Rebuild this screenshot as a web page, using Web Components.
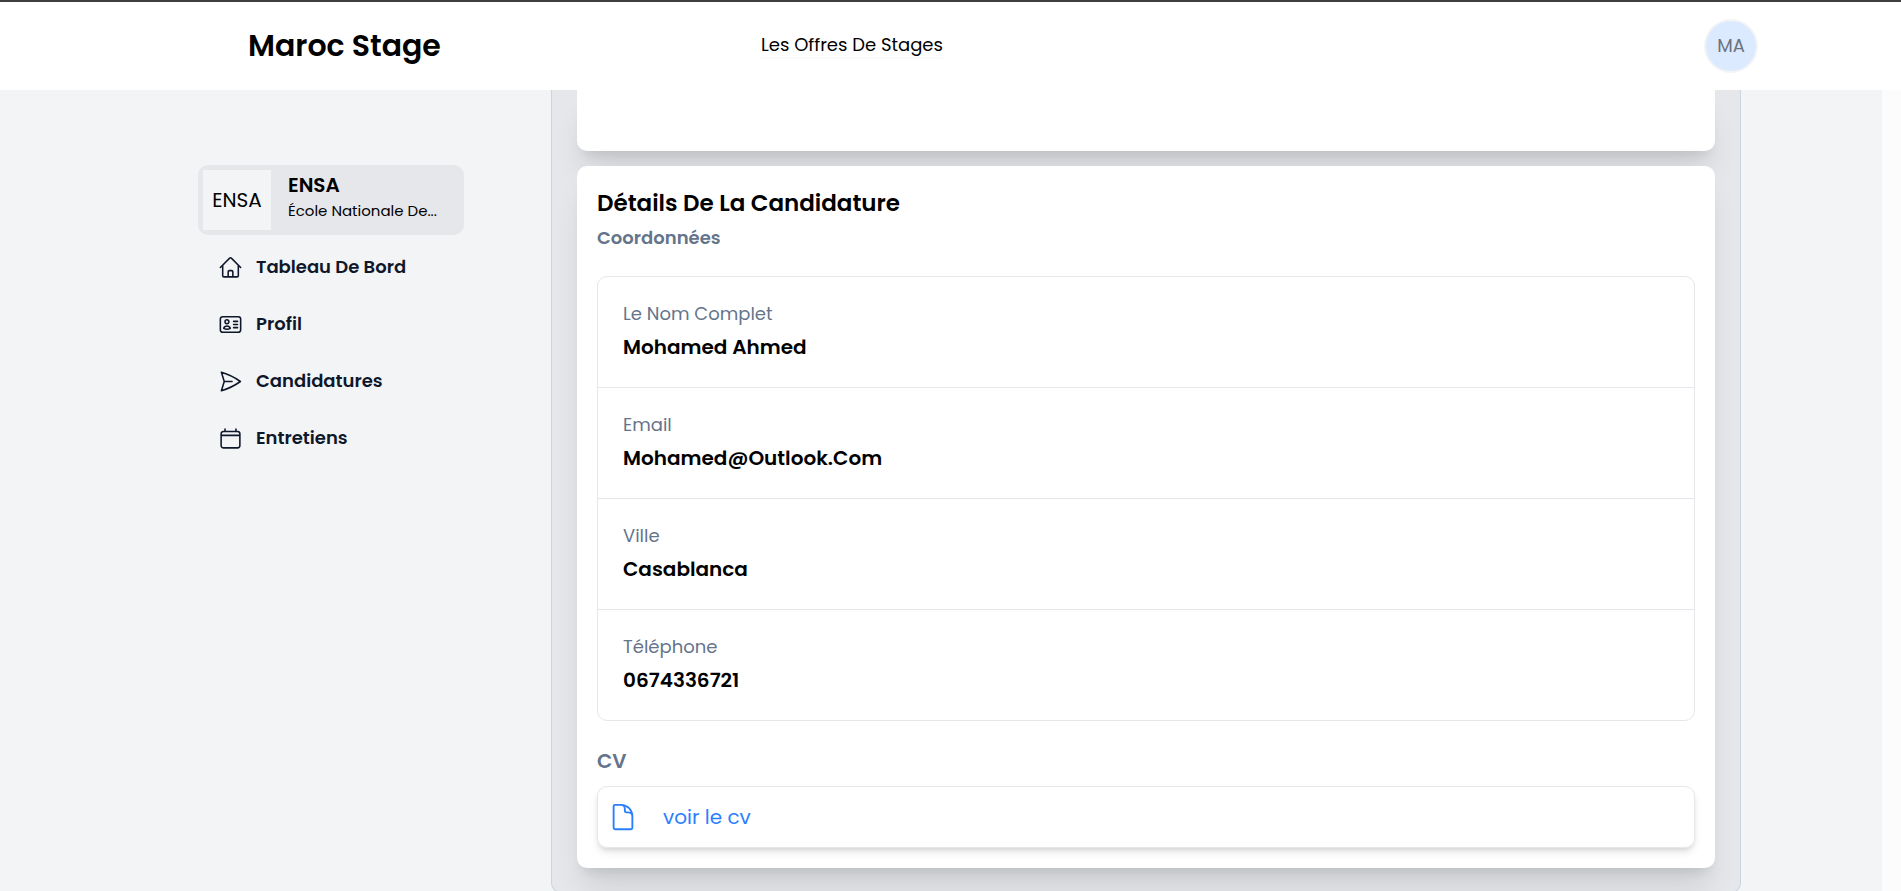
<!DOCTYPE html>
<html lang="fr">
<head>
<meta charset="utf-8">
<meta name="viewport" content="width=device-width, initial-scale=1">
<title>Maroc Stage</title>
<style>
  body {
    margin: 0;
    font-family: Poppins, Inter, "Open Sans", sans-serif;
    font-size: 18px;
    line-height: 28px;
    color: #000;
    background: #f3f4f6;
    --muted: #64748b;
    --line: #e5e7eb;
    --ink: #0f172a;
    --link: #2b7fff;
  }
</style>
</head>
<body>
<app-shell>
  <app-header slot="header" initials="MA">
    <span slot="brand">Maroc Stage</span>
    <a slot="nav" href="#offres">Les Offres De Stages</a>
  </app-header>

  <side-bar slot="sidebar">
    <school-card slot="top" logo="ENSA">
      <span slot="name">ENSA</span>
      <span slot="about">École Nationale De...</span>
    </school-card>
    <nav-item icon="home" href="#tableau">Tableau De Bord</nav-item>
    <nav-item icon="identity" href="#profil">Profil</nav-item>
    <nav-item icon="send" href="#candidatures">Candidatures</nav-item>
    <nav-item icon="calendar" href="#entretiens">Entretiens</nav-item>
  </side-bar>

  <content-card class="previous"></content-card>
  <content-card>
    <section-title slot="title" sub="Coordonnées">Détails De La Candidature</section-title>
    <detail-list>
      <detail-row label="Le Nom Complet">Mohamed Ahmed</detail-row>
      <detail-row label="Email">Mohamed@Outlook.Com</detail-row>
      <detail-row label="Ville">Casablanca</detail-row>
      <detail-row label="Téléphone">0674336721</detail-row>
    </detail-list>
    <file-link heading="CV" href="#cv">voir le cv</file-link>
  </content-card>
</app-shell>

<script>
  const ICONS = {
    home: '<path d="M2.25 12l8.954-8.955c.44-.439 1.152-.439 1.591 0L21.75 12M4.5 9.75v10.125c0 .621.504 1.125 1.125 1.125H9.75v-4.875c0-.621.504-1.125 1.125-1.125h2.25c.621 0 1.125.504 1.125 1.125V21h4.125c.621 0 1.125-.504 1.125-1.125V9.75M8.25 21h8.25"/>',
    identity: '<path d="M15 9h3.75M15 12h3.75M15 15h3.75M4.5 19.5h15a2.25 2.25 0 002.25-2.25V6.75A2.25 2.25 0 0019.5 4.5h-15a2.25 2.25 0 00-2.25 2.25v10.5A2.25 2.25 0 004.5 19.5zm6-10.125a1.875 1.875 0 11-3.75 0 1.875 1.875 0 013.75 0zm1.294 6.336a6.721 6.721 0 01-3.17.789 6.721 6.721 0 01-3.168-.789 3.376 3.376 0 016.338 0z"/>',
    send: '<path d="M6 12L3.269 3.126A59.768 59.768 0 0121.485 12 59.77 59.77 0 013.27 20.876L5.999 12zm0 0h7.5"/>',
    calendar: '<path d="M6.75 3v2.25M17.25 3v2.25M5.25 5.25h13.5a2.25 2.25 0 012.25 2.25v11.25a2.25 2.25 0 01-2.25 2.25H5.25A2.25 2.25 0 013 18.75V7.5a2.25 2.25 0 012.25-2.25zM3 9h18"/>',
    file: '<path d="M19.5 14.25v-2.625a3.375 3.375 0 00-3.375-3.375h-1.5A1.125 1.125 0 0113.5 7.125v-1.5a3.375 3.375 0 00-3.375-3.375H5.625c-.621 0-1.125.504-1.125 1.125v17.25c0 .621.504 1.125 1.125 1.125h12.75c.621 0 1.125-.504 1.125-1.125V11.25a9 9 0 00-9-9"/>'
  };
  const svg = name => `<svg viewBox="0 0 24 24" fill="none" stroke="currentColor" stroke-width="1.5" stroke-linecap="round" stroke-linejoin="round" aria-hidden="true">${ICONS[name]}</svg>`;

  const define = (tag, render) => customElements.define(tag, class extends HTMLElement {
    connectedCallback() {
      if (this.shadowRoot) return;
      this.attachShadow({ mode: 'open' }).innerHTML = render(this);
    }
  });

  define('app-shell', () => `
    <style>
      :host { display: flex; flex-direction: column; height: 100vh; overflow: hidden; }
      .body { flex: 1; min-height: 0; display: flex; overflow: hidden; }
      aside { flex: none; width: 266px; padding: 75px 87px 0 198px; }
      main {
        flex: 1; min-width: 0; align-self: flex-start; box-sizing: border-box;
        display: flex; flex-direction: column; gap: 15px;
        padding: 0 25px 24px; background: #e5e7eb;
        border: 1px solid #cbd5e1; border-top: 0; border-radius: 0 0 10px 10px;
      }
      .margin { flex: none; width: 141px; }
      .track { flex: none; width: 19px; background: #fcfcfc; }
    </style>
    <slot name="header"></slot>
    <div class="body">
      <aside><slot name="sidebar"></slot></aside>
      <main><slot></slot></main>
      <div class="margin"></div>
      <div class="track"></div>
    </div>`);

  define('app-header', el => `
    <style>
      :host { display: block; flex: none; background: #fff; border-top: 2px solid #3f3d3e; }
      header {
        display: grid; grid-template-columns: 513px 1fr auto; align-items: center;
        height: 88px; padding: 0 143px 0 248px;
      }
      .brand { font-size: 30px; line-height: 40px; font-weight: 600; }
      nav { display: flex; }
      ::slotted(a) { line-height: 24px; color: #000; text-decoration: none; border-bottom: 2px solid #fafafa; }
      button {
        width: 54px; height: 54px; padding: 0; border: 2px solid #f3f4f6; border-radius: 50%;
        background: #dbeafe; color: #6b7280; font: inherit;
      }
    </style>
    <header>
      <div class="brand"><slot name="brand"></slot></div>
      <nav><slot name="nav"></slot></nav>
      <button type="button">${el.getAttribute('initials')}</button>
    </header>`);

  define('side-bar', () => `
    <style>
      :host { display: block; }
      nav { display: flex; flex-direction: column; gap: 29px; padding: 18px 20px; }
    </style>
    <slot name="top"></slot>
    <nav><slot></slot></nav>`);

  define('school-card', el => `
    <style>
      :host { display: flex; gap: 17px; padding: 5px; border-radius: 10px; background: #e5e7eb; }
      .logo { flex: none; width: 68px; height: 60px; display: grid; place-items: center; background: #f3f4f6; font-size: 20px; }
      .text { flex: 1; min-width: 0; }
      .name { font-size: 20px; line-height: 30px; font-weight: 600; }
      .about { font-size: 15px; line-height: 22px; white-space: nowrap; }
    </style>
    <div class="logo">${el.getAttribute('logo')}</div>
    <div class="text">
      <div class="name"><slot name="name"></slot></div>
      <div class="about"><slot name="about"></slot></div>
    </div>`);

  define('nav-item', el => `
    <style>
      :host { display: block; }
      a { display: flex; align-items: center; gap: 13px; color: var(--ink); text-decoration: none; font-weight: 600; }
      svg { width: 25px; height: 25px; }
    </style>
    <a href="${el.getAttribute('href')}">${svg(el.getAttribute('icon'))}<span><slot></slot></span></a>`);

  define('content-card', () => `
    <style>
      :host {
        display: block; padding: 20px; border-radius: 10px; background: #fff;
        box-shadow: 0 25px 31px -6px rgb(0 0 0 / .1), 0 10px 12px -7px rgb(0 0 0 / .1);
      }
      :host(.previous) { height: 21px; border-radius: 0 0 10px 10px; }
    </style>
    <slot name="title"></slot>
    <slot></slot>`);

  define('section-title', el => `
    <style>
      :host { display: block; margin-bottom: 20px; }
      h2, h3 { margin: 0; font-weight: 600; }
      h2 { font-size: 23px; line-height: 34px; }
      h3 { font-size: 18px; line-height: 36px; color: var(--muted); }
    </style>
    <h2><slot></slot></h2>
    <h3>${el.getAttribute('sub')}</h3>`);

  define('detail-list', () => `
    <style>
      :host { display: block; border: 1px solid var(--line); border-radius: 10px; }
      dl { margin: 0; }
      ::slotted(:not(:first-child)) { border-top: 1px solid var(--line); }
    </style>
    <dl><slot></slot></dl>`);

  define('detail-row', el => `
    <style>
      :host { display: block; padding: 21px 25px 23px; }
      dt { font-size: 18px; line-height: 32px; color: var(--muted); }
      dd { margin: 0; font-size: 20px; line-height: 34px; font-weight: 600; }
    </style>
    <dt>${el.getAttribute('label')}</dt>
    <dd><slot></slot></dd>`);

  define('file-link', el => `
    <style>
      :host { display: block; margin-top: 25px; }
      h3 { margin: 0 0 10px; font-size: 20px; line-height: 30px; font-weight: 600; color: var(--muted); }
      a {
        display: flex; align-items: center; gap: 25px; padding: 15px 10px;
        border: 1px solid var(--line); border-radius: 10px;
        box-shadow: 0 5px 8px -1px rgb(0 0 0 / .1), 0 3px 5px -2px rgb(0 0 0 / .1);
        color: var(--link); font-size: 20px; line-height: 30px; text-decoration: none;
      }
      svg { width: 30px; height: 30px; }
    </style>
    <h3>${el.getAttribute('heading')}</h3>
    <a href="${el.getAttribute('href')}">${svg('file')}<span><slot></slot></span></a>`);
</script>
</body>
</html>
